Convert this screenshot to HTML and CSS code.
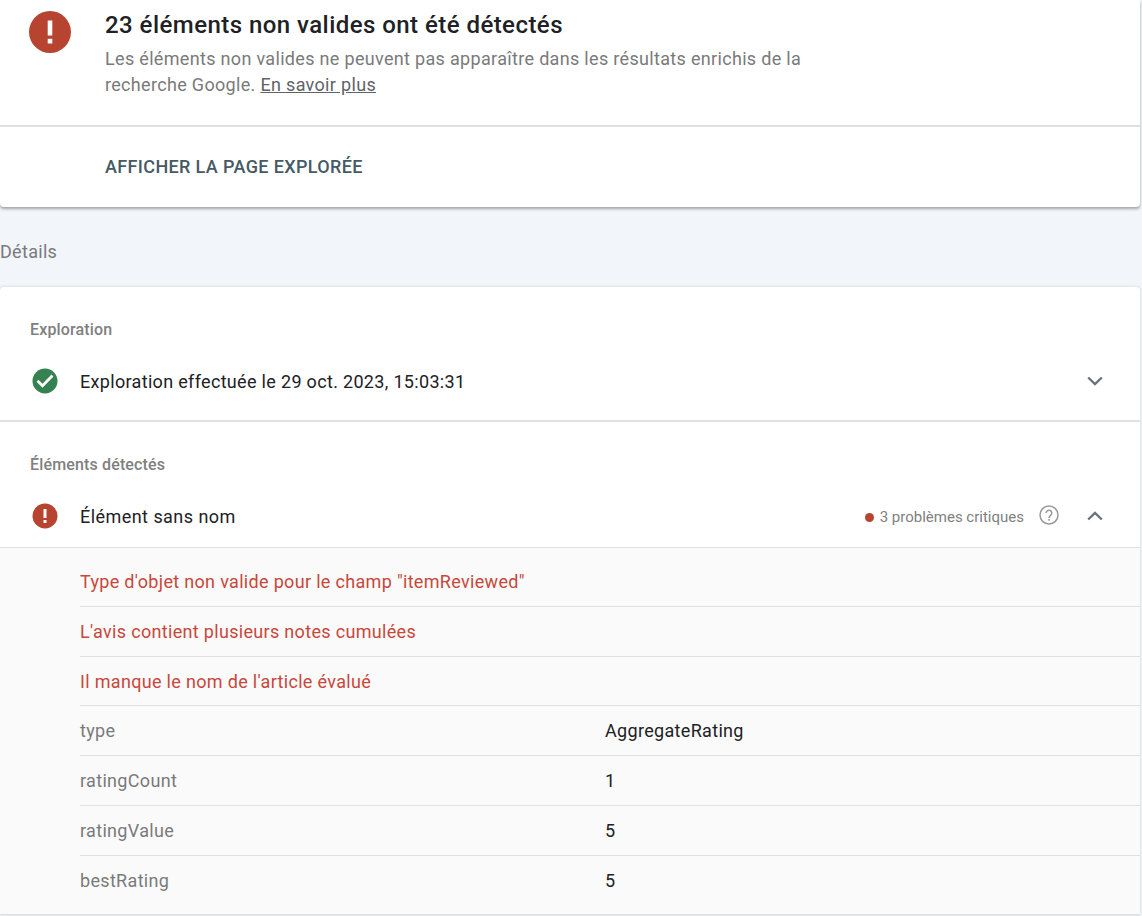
FILE: index.html
```html
<!DOCTYPE html>
<html lang="fr">
<head>
<meta charset="utf-8">
<title>Résultat du test</title>
<link rel="stylesheet" href="styles.css">
</head>
<body>
<section class="card top-card">
  <div class="summary">
    <div class="summary-icon">
      <svg width="42" height="42" viewBox="0 0 42 42"><circle cx="21" cy="21" r="21" fill="#b64431"/><rect x="18.7" y="9.500" width="4.600" height="15" fill="#fff"/><rect x="18.7" y="27.800" width="4.600" height="4.700" fill="#fff"/></svg>
    </div>
    <div class="summary-text">
      <h1 class="summary-title">23 éléments non valides ont été détectés</h1>
      <p class="summary-desc">Les éléments non valides ne peuvent pas apparaître dans les résultats enrichis de la recherche Google. <a class="summary-link" href="#">En savoir plus</a></p>
    </div>
  </div>
  <div class="action-row"><span class="action">AFFICHER LA PAGE EXPLORÉE</span></div>
</section>
<h2 class="details-heading">Détails</h2>
<section class="card details-card">
  <div class="group group-first">
    <div class="group-label">Exploration</div>
    <div class="item-row">
      <svg class="item-icon" width="26" height="26" viewBox="0 0 26 26"><circle cx="13" cy="13" r="12.500" fill="#34824f"/><path d="M5.500 12.800l5 5 10-10.300" fill="none" stroke="#fff" stroke-width="2.800"/></svg>
      <span class="item-name">Exploration effectuée le 29 oct. 2023, 15:03:31</span>
      <svg class="chevron" width="16" height="10" viewBox="0 0 16 10"><path d="M1.200 1.500L8 8l6.800-6.500" fill="none" stroke="#6b7479" stroke-width="2.400"/></svg>
    </div>
  </div>
  <div class="group">
    <div class="group-label">Éléments détectés</div>
    <div class="item-row">
      <svg class="item-icon" width="26" height="26" viewBox="0 0 26 26"><circle cx="13" cy="13" r="12.500" fill="#b64431"/><rect x="11.500" y="6" width="3" height="9" fill="#fff"/><rect x="11.500" y="17" width="3" height="3" fill="#fff"/></svg>
      <span class="item-name item-name-wide">Élément sans nom</span>
      <span class="status"><span class="status-dot"></span>3 problèmes critiques</span>
      <svg class="help" width="20" height="20" viewBox="0 0 20 20"><circle cx="10" cy="10" r="9" fill="none" stroke="#9a9a9a" stroke-width="1.500"/><path d="M7.200 8a2.800 2.800 0 1 1 4.400 2.300c-1 .7-1.600 1.200-1.600 2.600" fill="none" stroke="#9a9a9a" stroke-width="1.500"/><rect x="9.200" y="14" width="1.600" height="1.700" fill="#9a9a9a"/></svg>
      <svg class="chevron" width="16" height="10" viewBox="0 0 16 10"><path d="M1.200 8.500L8 2l6.800 6.500" fill="none" stroke="#6b7479" stroke-width="2.400"/></svg>
    </div>
    <div class="rows">
      <div class="row error">Type d'objet non valide pour le champ "itemReviewed"</div>
      <div class="row error">L'avis contient plusieurs notes cumulées</div>
      <div class="row error">Il manque le nom de l'article évalué</div>
      <div class="row"><span class="key">type</span><span class="value">AggregateRating</span></div>
      <div class="row"><span class="key">ratingCount</span><span class="value">1</span></div>
      <div class="row"><span class="key">ratingValue</span><span class="value">5</span></div>
      <div class="row last-row"><span class="key">bestRating</span><span class="value">5</span></div>
    </div>
  </div>
</section>
</body>
</html>
```
FILE: styles.css
```css
html, body {
  margin: 0;
  padding: 0;
  height: 916px;
  overflow: hidden;
}
body {
  background: #f2f5fa;
  font-family: Roboto, "Liberation Sans", sans-serif;
  padding-right: 2px;
  box-sizing: border-box;
}
.card {
  background: #fff;
  border-radius: 0 0 4px 4px;
}
.top-card {
  box-shadow: 0 2px 3px rgba(60, 64, 67, 0.45);
}
.summary {
  display: flex;
  box-sizing: border-box;
  border-bottom: 2px solid #e0e0e0;
  height: 127px;
}
.summary-icon {
  width: 105px;
  padding: 11px 0 0 29px;
  box-sizing: border-box;
  flex: none;
}
.summary-icon svg { display: block; }
.summary-text { padding-top: 9px; width: 720px; }
.summary-title {
  margin: 0;
  font-size: 24px;
  line-height: 32px;
  font-weight: 500;
  letter-spacing: 0.45px;
  color: #202124;
}
.summary-desc {
  margin: 5px 0 0;
  font-size: 18px;
  line-height: 26px;
  letter-spacing: 0.32px;
  color: #7a7a7a;
}
.summary-link { color: #5f6368; text-decoration: underline; }
.action-row {
  height: 78px;
  display: flex;
  align-items: center;
  padding: 0 0 2px 105px;
}
.action {
  font-size: 18px;
  font-weight: 500;
  letter-spacing: 0.36px;
  color: #455a64;
}
.details-heading {
  margin: 0;
  height: 80px;
  padding-top: 8px;
  box-sizing: border-box;
  display: flex;
  align-items: center;
  font-size: 18px;
  font-weight: 400;
  letter-spacing: 0.3px;
  color: #7a7a7a;
}
.details-card {
  border-radius: 4px 4px 0 0;
  box-shadow: 0 0 3px rgba(60, 64, 67, 0.2);
}
.group-first {
  border-bottom: 2px solid #e0e0e0;
  height: 135px;
  box-sizing: border-box;
}
.group-label {
  padding: 33px 0 0 30px;
  font-size: 16px;
  line-height: 20px;
  font-weight: 500;
  letter-spacing: 0.15px;
  color: #808080;
}
.item-row {
  display: flex;
  align-items: center;
  height: 62px;
  padding: 0 37px 0 32px;
  margin-top: 10px;
}
.item-icon { flex: none; margin-right: 22px; }
.item-name {
  flex: 1;
  font-size: 18px;
  letter-spacing: 0.32px;
  color: #202124;
}
.item-name-wide { letter-spacing: 0.45px; }
.status {
  display: flex;
  align-items: center;
  padding-top: 2px;
  font-size: 15px;
  color: #808080;
}
.status-dot {
  width: 9px;
  height: 9px;
  border-radius: 50%;
  background: #b64431;
  margin-right: 6px;
}
.help { margin: 0 0 2px 15px; }
.chevron { margin-left: 28px; }
.rows {
  background: #fafafa;
  border-top: 1px solid #e0e0e0;
  border-bottom: 1px solid #e0e0e0;
  padding: 9.400px 0 9px 80px;
}
.row {
  display: flex;
  align-items: center;
  height: 49.700px;
  box-sizing: border-box;
  border-bottom: 1px solid #e0e0e0;
  font-size: 18px;
  letter-spacing: 0.32px;
}
.last-row { border-bottom: 0; }
.error { color: #c8473a; }
.key { width: 525px; color: #7a7a7a; }
.value { color: #202124; }
```
